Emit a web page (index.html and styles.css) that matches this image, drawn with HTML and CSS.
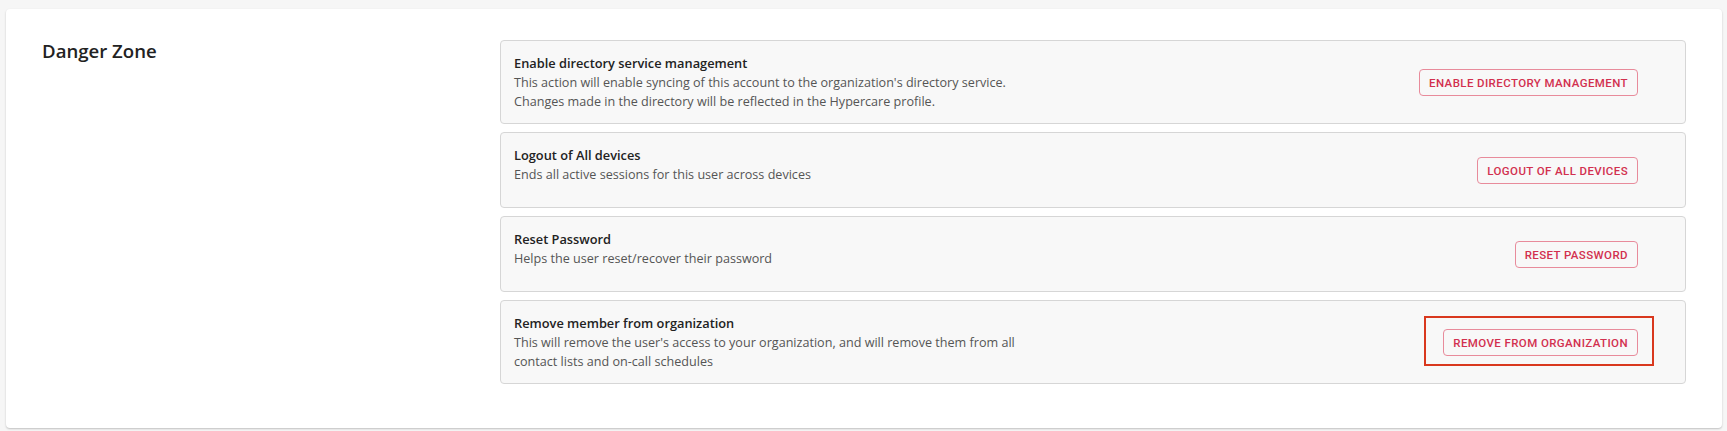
FILE: index.html
```html
<!DOCTYPE html>
<html lang="en">
    <head>
        <meta charset="UTF-8" />
        <meta name="viewport" content="width=device-width, initial-scale=1.0" />
        <title>Danger Zone</title>
        <link rel="stylesheet" href="styles.css">
    </head>

    <body>
        <div class="card">
            <div class="sectionTitle">
                <h2>Danger Zone</h2>
            </div>

            <div class="actions">
                <div class="action">
                    <div class="actionText">
                        <h3>Enable directory service management</h3>
                        <p>This action will enable syncing of this account to the organization's directory service.</p>
                        <p>Changes made in the directory will be reflected in the Hypercare profile.</p>
                    </div>
                    <button class="dangerButton">Enable directory management</button>
                </div>

                <div class="action">
                    <div class="actionText">
                        <h3>Logout of All devices</h3>
                        <p>Ends all active sessions for this user across devices</p>
                    </div>
                    <button class="dangerButton">Logout of all devices</button>
                </div>

                <div class="action">
                    <div class="actionText">
                        <h3>Reset Password</h3>
                        <p>Helps the user reset/recover their password</p>
                    </div>
                    <button class="dangerButton">Reset password</button>
                </div>

                <div class="action">
                    <div class="actionText narrow">
                        <h3>Remove member from organization</h3>
                        <p>This will remove the user's access to your organization, and will remove them from all contact lists and on-call schedules</p>
                    </div>
                    <div class="flagged">
                        <button class="dangerButton">Remove from organization</button>
                    </div>
                </div>
            </div>
        </div>
    </body>
</html>
```

FILE: styles.css
```css
body {
    background-color: #f6f6f6;
    margin: 0;
    padding: 9px 5px 4px 6px;
    font-family: "Open Sans", "Noto Sans", sans-serif;
    color: #222222;
}
.card {
    display: grid;
    grid-template-columns: 458px 1fr;
    background-color: #ffffff;
    border-radius: 4px;
    box-shadow: 0 1px 2px rgba(0, 0, 0, 0.22);
    padding: 31px 36px 44px 36px;
}
h2 {
    margin: 0;
    font-size: 18.6px;
    font-weight: 600;
    line-height: 22px;
}
.actions {
    display: flex;
    flex-direction: column;
    gap: 8px;
}
.action {
    display: flex;
    align-items: center;
    justify-content: space-between;
    min-height: 76px;
    box-sizing: border-box;
    background-color: #f8f8f8;
    border: 1px solid #d6d6d6;
    border-radius: 4px;
    padding: 13px 47px 12px 13px;
}
.actionText {
    align-self: flex-start;
}
.actionText.narrow {
    max-width: 510px;
}
h3 {
    margin: 0;
    font-size: 12.8px;
    font-weight: 600;
    line-height: 19px;
}
.actionText p {
    margin: 0;
    font-size: 12.6px;
    line-height: 19px;
    color: #555555;
}
.dangerButton {
    font-family: Roboto, sans-serif;
    font-size: 11.5px;
    font-weight: 500;
    letter-spacing: 0.4px;
    text-transform: uppercase;
    color: #d2304f;
    background: transparent;
    border: 1px solid #e88b9b;
    border-radius: 4px;
    height: 27px;
    padding: 0 9px;
}
.flagged {
    position: relative;
}
.flagged::after {
    content: "";
    position: absolute;
    top: -13px;
    right: -16px;
    bottom: -10px;
    left: -19px;
    border: 2px solid #d9381e;
}
```
